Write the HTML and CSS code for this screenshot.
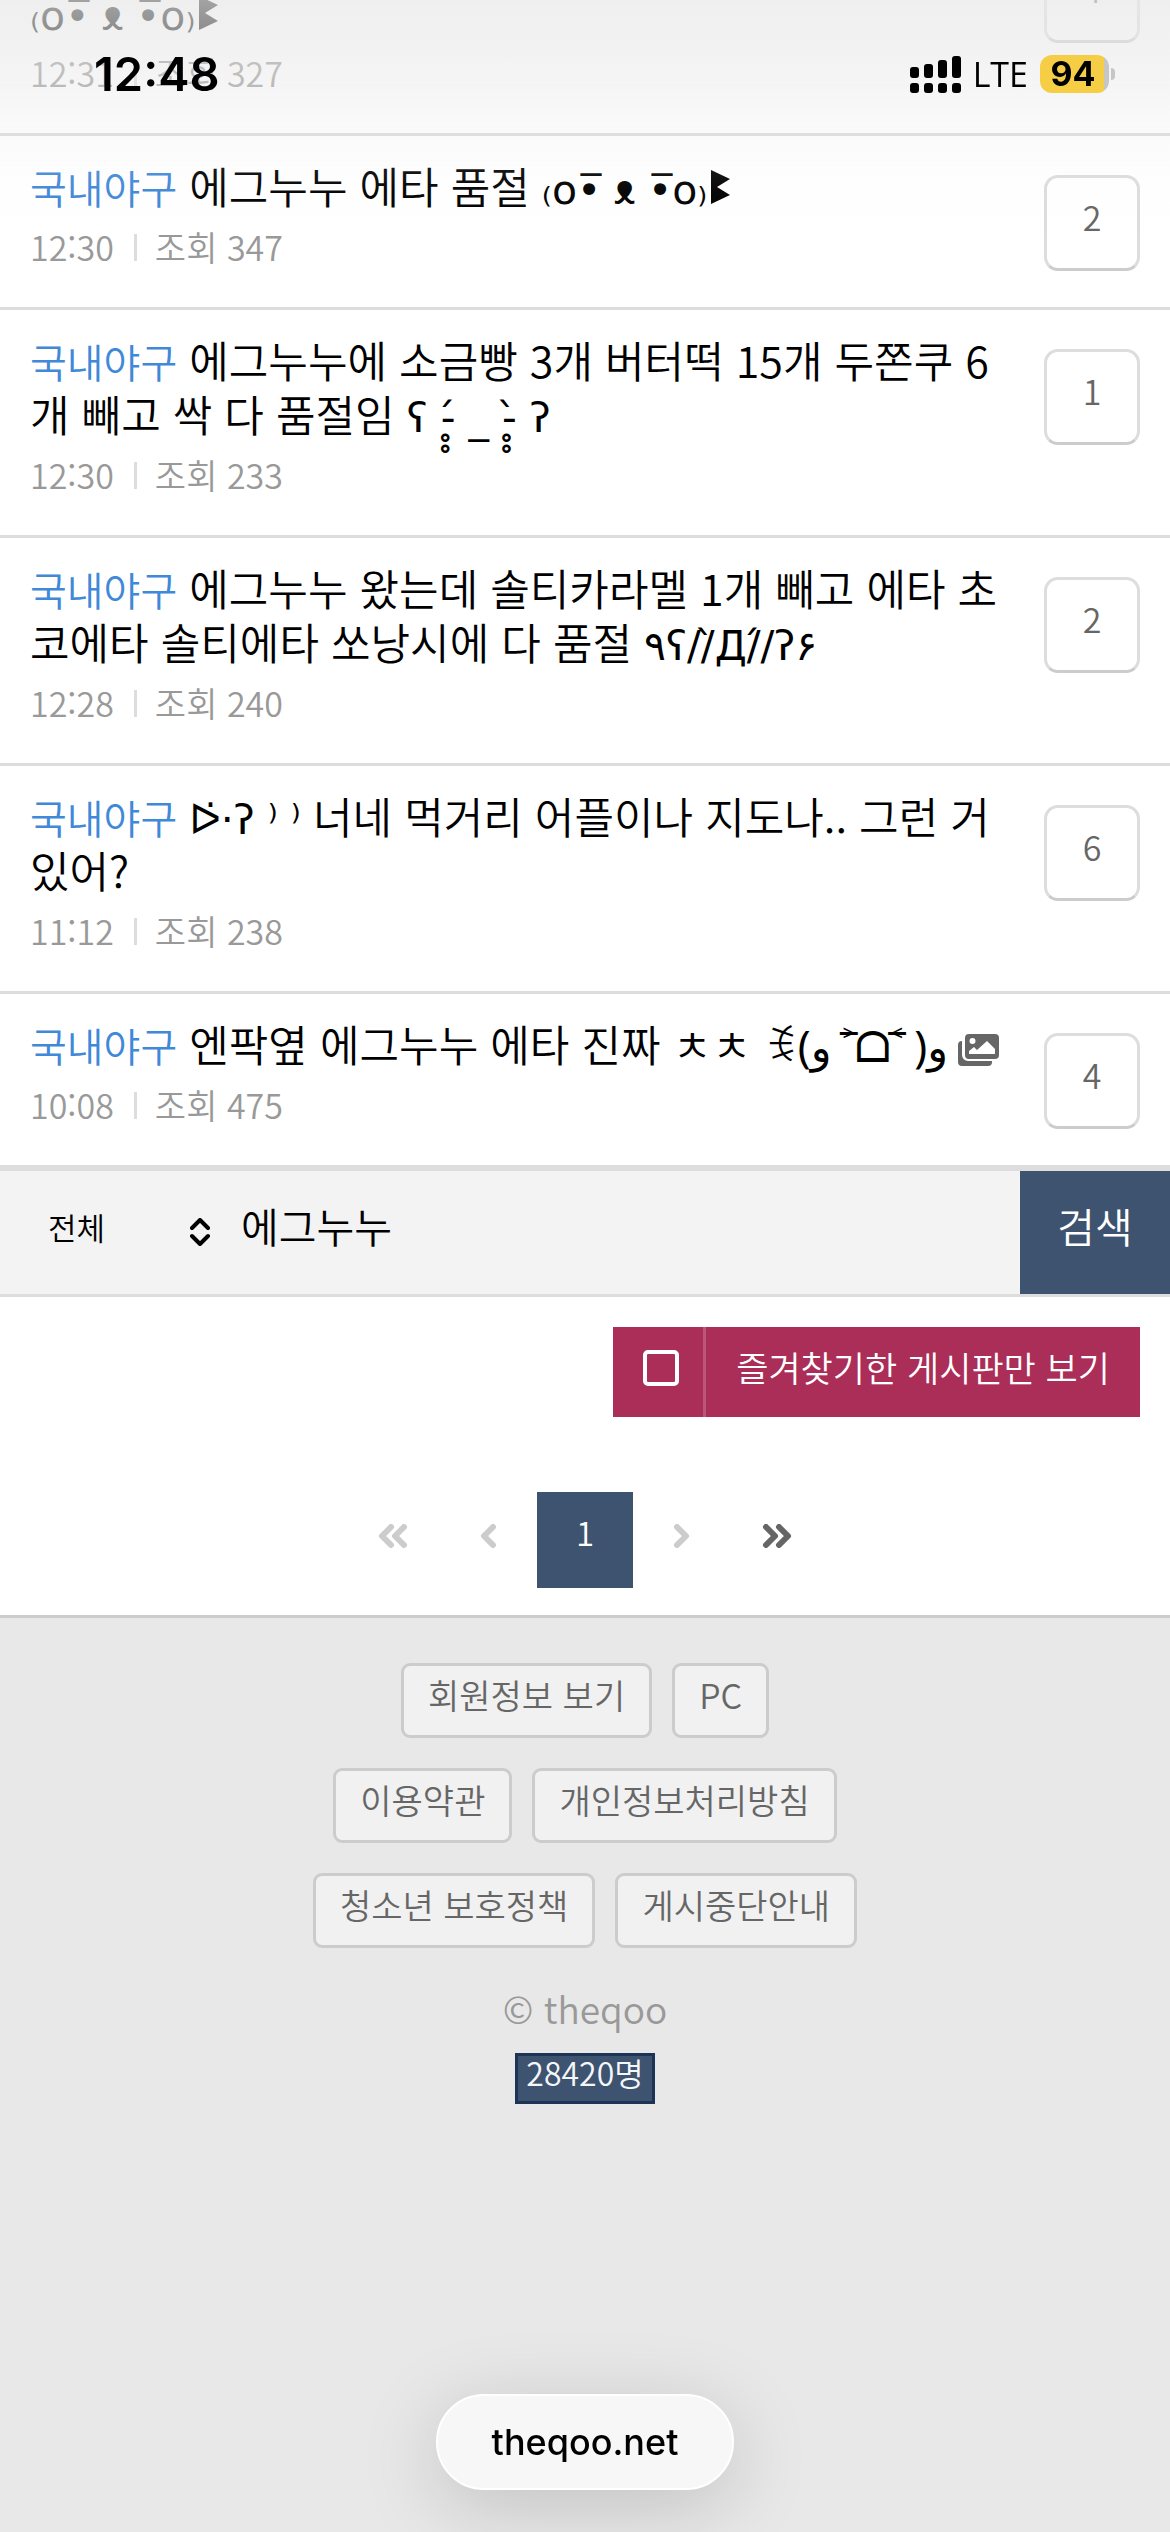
FILE: index.html
```html
<!DOCTYPE html>
<html lang="ko">
<head>
<meta charset="utf-8">
<meta name="viewport" content="width=device-width, initial-scale=1">
<title>theqoo</title>
<link rel="stylesheet" href="styles.css">
</head>
<body>
<header class="status">
  <span class="status-time">12:48</span>
  <span class="status-right">
    <svg class="signal" viewBox="0 0 51 37" aria-hidden="true">
      <rect x="0" y="11" width="9" height="11" rx="3"/><rect x="14" y="8" width="9" height="14" rx="3"/>
      <rect x="28" y="4" width="9" height="18" rx="3"/><rect x="42" y="0" width="9" height="22" rx="3"/>
      <rect x="0" y="27" width="9" height="10" rx="3"/><rect x="14" y="27" width="9" height="10" rx="3"/>
      <rect x="28" y="27" width="9" height="10" rx="3"/><rect x="42" y="27" width="9" height="10" rx="3"/>
    </svg>
    <span class="network">LTE</span>
    <span class="battery"><span class="battery-level">94</span></span>
  </span>
</header>

<main>
  <ul class="list">
    <li class="row row-scrolled">
      <div class="post">
        <a class="title" href="#"><span class="face">₍o•̅ ᴥ •̅o₎</span><svg class="flag" viewBox="0 0 19 34" aria-hidden="true"><path d="M0 0 19 9 6 17 19 25 0 34Z"/></svg></a>
        <p class="meta"><span>12:31</span><span class="views">조회 327</span></p>
      </div>
      <a class="replies" href="#">4</a>
    </li>
    <li class="row">
      <div class="post">
        <a class="title" href="#"><span class="board">국내야구</span> 에그누누 에타 품절 <span class="face">₍o•̅ ᴥ •̅o₎</span><svg class="flag" viewBox="0 0 19 34" aria-hidden="true"><path d="M0 0 19 9 6 17 19 25 0 34Z"/></svg></a>
        <p class="meta"><span>12:30</span><span class="views">조회 347</span></p>
      </div>
      <a class="replies" href="#">2</a>
    </li>
    <li class="row">
      <div class="post">
        <a class="title" href="#"><span class="board">국내야구</span> 에그누누에 소금빵 3개 버터떡 15개 두쫀쿠 6개 빼고 싹 다 품절임 <span class="face">ʕ -̥̥́ _ -̥̥̀ ʔ</span></a>
        <p class="meta"><span>12:30</span><span class="views">조회 233</span></p>
      </div>
      <a class="replies" href="#">1</a>
    </li>
    <li class="row">
      <div class="post">
        <a class="title" href="#"><span class="board">국내야구</span> 에그누누 왔는데 솔티카라멜 1개 빼고 에타 초코에타 솔티에타 쏘낭시에 다 품절 <span class="face">٩ʕ//̀Д/́/ʔ۶</span></a>
        <p class="meta"><span>12:28</span><span class="views">조회 240</span></p>
      </div>
      <a class="replies" href="#">2</a>
    </li>
    <li class="row">
      <div class="post">
        <a class="title" href="#"><span class="board">국내야구</span> <span class="face">ᐅ̇·ʔ ⁾ ⁾</span> 너네 먹거리 어플이나 지도나.. 그런 거 있어?</a>
        <p class="meta"><span>11:12</span><span class="views">조회 238</span></p>
      </div>
      <a class="replies" href="#">6</a>
    </li>
    <li class="row">
      <div class="post">
        <a class="title" href="#"><span class="board">국내야구</span> 엔팍옆 에그누누 에타 진짜 ㅊㅊ <span class="face face-sans">ꉂ(و ˃̵ᗝ˂̵ )و</span> <svg class="photo" viewBox="0 0 41 32" role="img" aria-label="사진"><path fill="#666" fill-rule="evenodd" d="M11 0H37a4 4 0 0 1 4 4V21a4 4 0 0 1-4 4H11a4 4 0 0 1-4-4V4a4 4 0 0 1 4-4ZM14.500 4a3 3 0 1 0 0 6 3 3 0 0 0 0-6ZM11 20V17l5-4 3 3 10-9 8 8v5Z"/><path fill="#666" d="M4 7V21a6 6 0 0 0 6 6H34v1a4 4 0 0 1-4 4H4a4 4 0 0 1-4-4V11a4 4 0 0 1 4-4Z"/></svg></a>
        <p class="meta"><span>10:08</span><span class="views">조회 475</span></p>
      </div>
      <a class="replies" href="#">4</a>
    </li>
  </ul>

  <form class="search">
    <div class="scope">
      <select class="scope-select" aria-label="검색 대상"><option>전체</option></select>
      <svg class="scope-arrows" viewBox="0 0 20 28" aria-hidden="true"><path d="M2 10 10 2l8 8M2 18l8 8 8-8"/></svg>
    </div>
    <input class="query" type="text" value="에그누누" aria-label="검색어">
    <button class="submit" type="submit">검색</button>
  </form>

  <div class="tools">
    <label class="favorites"><span class="favorites-box"><input type="checkbox"></span><span class="favorites-text">즐겨찾기한 게시판만 보기</span></label>
  </div>

  <nav class="pages" aria-label="페이지">
    <a class="page off" href="#" aria-label="처음"><svg viewBox="0 0 30 24"><path d="M13 3 4 12l9 9M26 3l-9 9 9 9"/></svg></a>
    <a class="page off" href="#" aria-label="이전"><svg viewBox="0 0 30 24"><path d="M19 3l-9 9 9 9"/></svg></a>
    <a class="page current" href="#" aria-current="page">1</a>
    <a class="page off" href="#" aria-label="다음"><svg viewBox="0 0 30 24"><path d="M11 3l9 9-9 9"/></svg></a>
    <a class="page" href="#" aria-label="마지막"><svg viewBox="0 0 30 24"><path d="M4 3l9 9-9 9M17 3l9 9-9 9"/></svg></a>
  </nav>
</main>

<footer class="footer">
  <div class="links"><a class="chip" href="#">회원정보 보기</a><a class="chip" href="#">PC</a></div>
  <div class="links"><a class="chip" href="#">이용약관</a><a class="chip" href="#">개인정보처리방침</a></div>
  <div class="links"><a class="chip" href="#">청소년 보호정책</a><a class="chip" href="#">게시중단안내</a></div>
  <p class="copyright">© theqoo</p>
  <p class="visitors">28420명</p>
</footer>

<button class="address" type="button">theqoo.net</button>
</body>
</html>
```
FILE: styles.css
```css
* { box-sizing: border-box; }
html, body { margin: 0; }
body {
  min-height: 100vh;
  display: flex;
  flex-direction: column;
  overflow-x: hidden;
  background: #fff;
  color: #000;
  font-family: "Noto Sans CJK KR", "Noto Sans", sans-serif;
  font-weight: 350;
}
a { color: inherit; text-decoration: none; }
p, ul { margin: 0; padding: 0; }
input, select, button { font: inherit; color: inherit; border: 0; border-radius: 0; margin: 0; padding: 0; background: none; }

/* phone status bar */
.status {
  position: fixed;
  inset: 0 0 auto 0;
  z-index: 2;
  height: 240px;
  padding: 46px 61px 0 94px;
  display: flex;
  align-items: flex-start;
  justify-content: space-between;
  font-family: Inter, sans-serif;
  background: linear-gradient(rgba(232,232,232,.7), rgba(232,232,232,.47) 75px, rgba(232,232,232,.2) 134px, rgba(232,232,232,.04) 190px, rgba(232,232,232,0));
}
.status-time { font-size: 47px; line-height: 56px; font-weight: 600; }
.status-right { display: flex; align-items: center; height: 56px; }
.signal { width: 51px; height: 37px; }
.network { margin: 0 12px; font: 500 34px/56px "Open Sans", sans-serif; }
.battery { position: relative; width: 69px; height: 38px; border-radius: 12px; background: linear-gradient(90deg, #f6ce46 64px, #c6c6c6 64px); }
.battery::after { content: ""; position: absolute; left: 71px; top: 13px; width: 4px; height: 12px; border-radius: 0 6px 6px 0; background: #c6c6c6; }
.battery-level { display: block; width: 66px; text-align: center; font-size: 34px; line-height: 38px; font-weight: 700; }

/* post list, scrolled partly under the status bar */
.list { list-style: none; margin-top: -38px; border-bottom: 3px solid #ddd; }
.row { display: flex; align-items: flex-start; gap: 20px; padding: 22px 30px 30px; border-bottom: 3px solid #ddd; }
.post { flex: 1; min-width: 0; padding-bottom: 9px; }
.title { display: block; font-size: 43px; line-height: 54px; word-break: break-all; }
.board { color: #4088d8; font-size: 40px; line-height: 0; }
.face { font-family: "DejaVu Sans", "Noto Sans", sans-serif; font-size: 41px; font-weight: 400; line-height: 0; }
.face-sans { font-family: "Noto Sans", "DejaVu Sans", sans-serif; font-size: 43px; }
.flag { width: 19px; height: 34px; margin-left: 4px; }
.photo { width: 41px; height: 32px; vertical-align: -4px; }
.meta { display: flex; align-items: center; margin-top: 14px; color: #999; font-size: 34px; line-height: 42px; }
.views { display: flex; align-items: center; }
.views::before { content: ""; width: 3px; height: 27px; margin: 0 18px 0 20px; background: #ddd; }
.replies {
  width: 96px; height: 96px; margin-top: 17px; padding-bottom: 12px;
  display: flex; align-items: center; justify-content: center;
  border: 3px solid #ddd; border-bottom-color: #ccc; border-radius: 14px;
  color: #666; font-size: 34px; line-height: 42px;
}
.row-scrolled .replies { margin-top: -37px; }

/* search bar */
.search { display: flex; height: 126px; background: #f3f3f3; border-bottom: 3px solid #ddd; }
.scope { position: relative; width: 241px; }
.scope-select { appearance: none; width: 100%; height: 100%; padding: 0 60px 12px 48px; font-size: 31px; }
.scope-arrows { position: absolute; left: 190px; top: 47px; width: 20px; height: 28px; fill: none; stroke: #000; stroke-width: 4; stroke-linecap: round; stroke-linejoin: round; pointer-events: none; }
.query { flex: 1; min-width: 0; padding-bottom: 16px; font-size: 41px; }
.submit { width: 150px; padding-bottom: 16px; background: #3e536f; color: #fff; font-size: 41px; }

/* favourites toggle */
.tools { display: flex; justify-content: flex-end; padding: 30px 30px 75px; }
.favorites { display: flex; height: 90px; background: #aa2e57; color: #fff; font-size: 35px; }
.favorites-box { width: 90px; padding: 0 0 9px 6px; display: flex; align-items: center; justify-content: center; }
.favorites-box input { appearance: none; width: 36px; height: 36px; border: 4px solid #fff; border-radius: 5px; }
.favorites-text { display: flex; align-items: center; padding: 0 30px 12px; border-left: 3px solid #bb5878; }

/* pagination */
.pages { display: flex; justify-content: center; padding-bottom: 27px; }
.page { width: 96px; height: 96px; padding-bottom: 8px; display: flex; align-items: center; justify-content: center; color: #666; font-size: 33px; }
.page svg { width: 30px; height: 24px; fill: none; stroke: currentColor; stroke-width: 6; stroke-linecap: round; stroke-linejoin: round; }
.page.off { color: #ccc; }
.page.current { background: #3e536f; color: #fff; padding-bottom: 16px; }

/* footer */
.footer { flex: 1; display: flex; flex-direction: column; align-items: center; gap: 30px; padding-top: 45px; background: #e8e8e8; border-top: 3px solid #ccc; color: #666; }
.links { display: flex; gap: 20px; }
.chip { height: 75px; padding: 0 24px 12px; display: flex; align-items: center; border: 3px solid #ccc; border-radius: 9px; background: #f1f1f1; font-size: 34px; }
.copyright { color: #999; font-size: 37px; line-height: 60px; }
.visitors { height: 51px; margin-top: -15px; padding: 0 8px; border: 3px solid #1c3557; background: #3e536f; color: #f3f6fa; font-size: 32px; line-height: 32px; }

/* floating address pill */
.address {
  position: fixed; left: 50%; bottom: 42px; transform: translateX(-50%);
  width: 298px; height: 96px; border: 2px solid #fff; border-radius: 48px;
  background: #f7f7f7; color: #000; font: 500 36px/48px Inter, sans-serif;
  box-shadow: 0 16px 80px rgba(0,0,0,.17);
}
```
